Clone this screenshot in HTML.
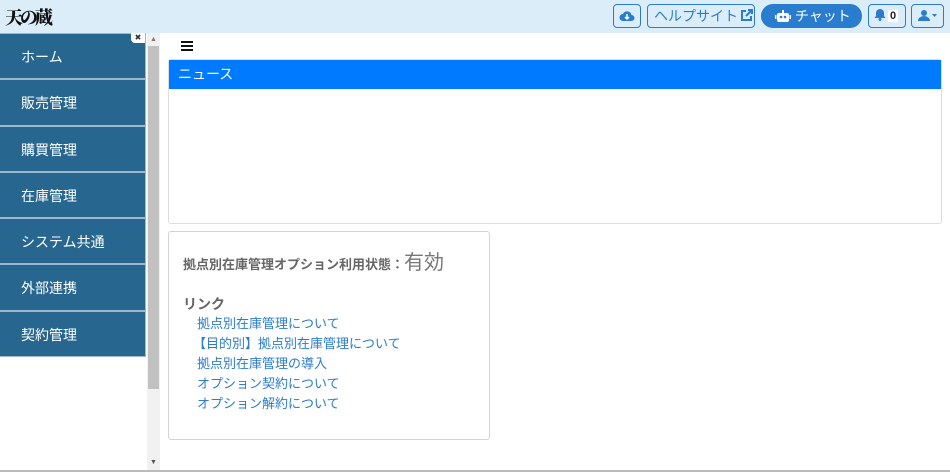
<!DOCTYPE html>
<html><head><meta charset="utf-8"><style>
*{margin:0;padding:0;box-sizing:border-box}
body{width:950px;height:472px;overflow:hidden;background:#fff;font-family:"Liberation Sans","Noto Sans CJK JP",sans-serif;position:relative}
.top{position:absolute;left:0;top:0;width:950px;height:33px;background:#dcedfa}
.logo{position:absolute;left:5px;top:4px;font-family:"Liberation Serif","Noto Serif CJK SC",serif;font-weight:900;font-size:18px;color:#111;letter-spacing:-3px}
.btn{position:absolute;top:4px;height:24px;border:1px solid #2a7ccf;border-radius:4px;color:#2a7ccf;font-size:14px;line-height:22px;background:#dcedfa}
.side{position:absolute;left:0;top:33px;width:146px}
.item{height:46.3px;background:#26668f;border:1px solid #9cb9cc;border-left:none;color:#fff;font-size:14px;line-height:47px;padding-left:21px}
.sb{position:absolute;left:147px;top:33px;width:13px;height:437px;background:#f1f1f1}
.thumb{position:absolute;left:148px;top:46px;width:11px;height:343px;background:#c1c1c1}
a{color:#2a7ccf;text-decoration:none}
</style></head><body>
<div class="top">
<div class="logo">天の蔵</div>
<div class="btn" style="left:613px;width:28px;text-align:center"><svg width="16" height="12" viewBox="0 0 16 12" style="margin-top:5px"><path d="M4 11a3.5 3.5 0 0 1 0-7a4.5 4.5 0 0 1 8.5 1a3 3 0 0 1 0 6z" fill="#2a7ccf"/><path d="M8 4v5M6 7l2 2 2-2" stroke="#fff" stroke-width="1.5" fill="none"/></svg></div>
<div class="btn" style="left:647px;width:108px;padding-left:6px">ヘルプサイト<svg width="13" height="13" viewBox="0 0 13 13" style="vertical-align:-1px;margin-left:2px"><path d="M6 2H2v9h9V7" stroke="#2a7ccf" stroke-width="2" fill="none"/><path d="M6 7l6-6M8 1h4v4" stroke="#2a7ccf" stroke-width="2" fill="none"/></svg></div>
<div class="btn" style="left:761px;width:101px;background:#2a7ccf;color:#fff;border-radius:12px;padding-left:13px;line-height:22px"><svg width="16" height="13" viewBox="0 0 16 13" style="vertical-align:-2px"><rect x="2" y="3" width="12" height="9" rx="2" fill="#fff"/><rect x="7" y="0" width="2" height="3" fill="#fff"/><circle cx="6" cy="7" r="1.3" fill="#2a7ccf"/><circle cx="10" cy="7" r="1.3" fill="#2a7ccf"/><rect x="0" y="5" width="1.5" height="4" fill="#fff"/><rect x="14.5" y="5" width="1.5" height="4" fill="#fff"/></svg> チャット</div>
<div class="btn" style="left:868px;width:38px;padding-left:5px;font-size:11px;font-weight:bold;color:#222"><svg width="12" height="13" viewBox="0 0 12 13" style="vertical-align:-2px"><path d="M6 1a4 4 0 0 0-4 4v3l-1.5 2h11L10 8V5a4 4 0 0 0-4-4z" fill="#2a7ccf"/><circle cx="6" cy="11.5" r="1.5" fill="#2a7ccf"/></svg><span style="background:#fff;padding:0 2px;margin-left:2px">0</span></div>
<div class="btn" style="left:911px;width:33px;text-align:center"><svg width="22" height="12" viewBox="0 0 22 12"><circle cx="7" cy="4" r="3" fill="#2a7ccf"/><path d="M1 12a6 5 0 0 1 12 0z" fill="#2a7ccf"/><path d="M15 5h5l-2.5 3z" fill="#2a7ccf"/></svg></div>
</div>
<div class="side">
<div class="item">ホーム</div><div class="item">販売管理</div><div class="item">購買管理</div><div class="item">在庫管理</div><div class="item">システム共通</div><div class="item">外部連携</div><div class="item">契約管理</div>
</div>
<div style="position:absolute;left:131px;top:33px;width:14px;height:10px;background:#fff;border-radius:0 0 0 4px;font-size:8px;text-align:center;line-height:9px;color:#333">&#x2716;</div>
<div class="sb"></div><div class="thumb"></div>
<div style="position:absolute;left:150px;top:36px;font-size:7px;color:#777">▲</div>
<div style="position:absolute;left:150px;top:459px;font-size:7px;color:#555">▼</div>
<div style="position:absolute;left:181px;top:41px;width:12px;height:2px;background:#111;box-shadow:0 4px 0 #111,0 8px 0 #111"></div>
<div style="position:absolute;left:168px;top:59px;width:774px;height:165px;border:1px solid #ddd;border-radius:3px">
<div style="height:29px;background:#007bff;color:#fff;font-size:14px;line-height:29px;padding-left:9px">ニュース</div>
</div>
<div style="position:absolute;left:168px;top:231px;width:322px;height:209px;border:1px solid #d4d4d4;border-radius:3px;padding:14px 0 0 14px;color:#666">
<div style="font-size:13px;font-weight:bold">拠点別在庫管理オプション利用状態：<span style="font-size:20px;font-weight:normal;color:#777">有効</span></div>
<div style="font-size:14px;font-weight:bold;margin-top:19px;line-height:20px">リンク</div>
<div style="font-size:13px;line-height:20px;padding-left:14px">
<a>拠点別在庫管理について</a><br><a style="margin-left:-4px">【目的別】拠点別在庫管理について</a><br><a>拠点別在庫管理の導入</a><br><a>オプション契約について</a><br><a>オプション解約について</a></div>
</div>
<div style="position:absolute;left:0;top:470px;width:950px;height:2px;background:#bbb"></div>
</body></html>
